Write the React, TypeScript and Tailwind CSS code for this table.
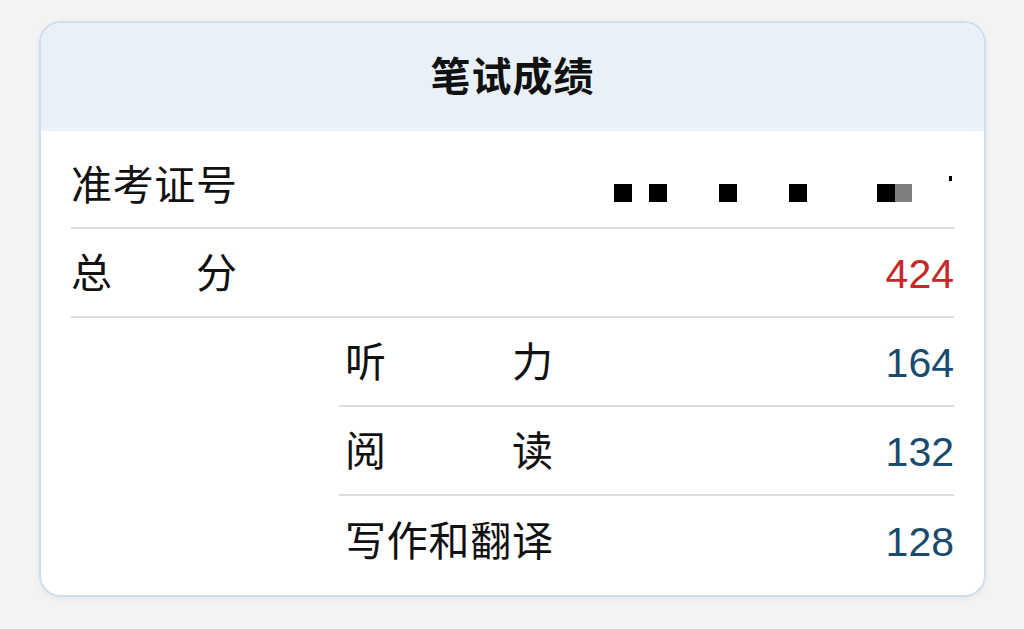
const font = { fontFamily: '"Liberation Sans", "Noto Sans CJK SC", sans-serif' };

function Label({ chars, width }: { chars: string[]; width: string }) {
    return (
        <div className={`flex justify-between ${width}`}>
            {chars.map((c, i) => (
                <span key={i}>{c}</span>
            ))}
        </div>
    );
}

export default function App() {
    const subScores = [
        { chars: ['听', '力'], value: '164' },
        { chars: ['阅', '读'], value: '132' },
        { chars: ['写', '作', '和', '翻', '译'], value: '128' },
    ];

    return (
        <div className="w-[1024px] h-[629px] bg-[#f3f3f3] pt-[21px] pl-[39px]" style={font}>
            <div className="w-[947px] h-[576px] rounded-[22px] border-2 border-[#cddfeb] bg-white overflow-hidden shadow-[0_2px_6px_rgba(0,0,0,0.06)]">
                <div className="h-[108px] bg-[#eaf0f8] flex items-center justify-center">
                    <h1 className="text-[40px] font-bold text-[#111] tracking-[1px] leading-none">笔试成绩</h1>
                </div>

                <div className="mx-[30px] text-[41px] text-[#111] leading-none">
                    <div className="h-[98px] pt-[14px] flex items-center justify-between border-b-2 border-[#dddddd]">
                        <Label chars={['准', '考', '证', '号']} width="w-[166px]" />
                        <div className="flex items-center h-[18px] mt-[14px] mr-[2px]">
                            <span className="w-[18px] h-[18px] bg-black"></span>
                            <span className="w-[18px] h-[18px] bg-black ml-[17px]"></span>
                            <span className="w-[18px] h-[18px] bg-black ml-[52px]"></span>
                            <span className="w-[18px] h-[18px] bg-black ml-[52px]"></span>
                            <span className="w-[18px] h-[18px] bg-black ml-[70px]"></span>
                            <span className="w-[17px] h-[18px] bg-[#7f7f7f]"></span>
                            <span className="w-[3px] h-[5px] bg-black ml-[37px] -mt-[30px]"></span>
                        </div>
                    </div>

                    <div className="h-[89px] pt-[4px] flex items-center justify-between border-b-2 border-[#dddddd]">
                        <Label chars={['总', '分']} width="w-[166px]" />
                        <span className="text-[#c62828]">424</span>
                    </div>

                    <div className="ml-[268px]">
                        {subScores.map((s, i) => (
                            <div
                                key={i}
                                className={`h-[89px] pt-[4px] flex items-center justify-between pl-[6px] ${i < subScores.length - 1 ? 'border-b-2 border-[#dddddd]' : ''}`}
                            >
                                <Label chars={s.chars} width="w-[208px]" />
                                <span className="text-[#1a4a6e]">{s.value}</span>
                            </div>
                        ))}
                    </div>
                </div>
            </div>
        </div>
    );
}
